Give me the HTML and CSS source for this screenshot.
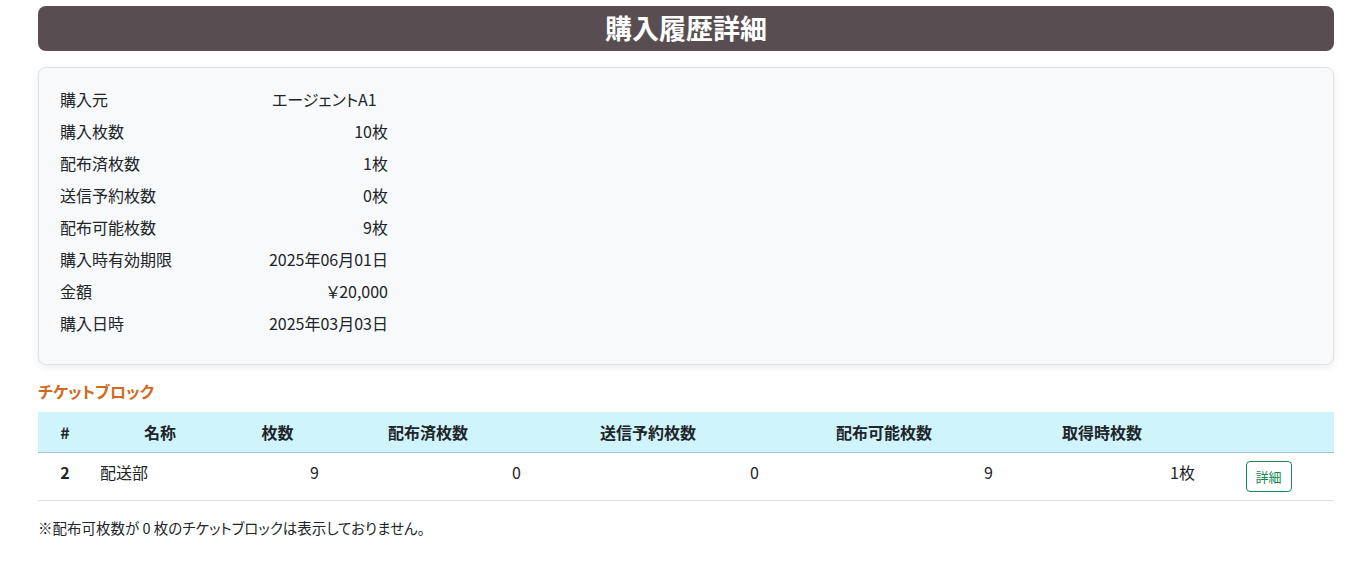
FILE: index.html
```html
<!DOCTYPE html>
<html lang="ja">
<head>
  <meta charset="UTF-8" />
  <meta name="viewport" content="width=device-width, initial-scale=1.0"/>
  <title>購入履歴詳細</title>
  <link rel="stylesheet" href="styles.css">
</head>
<body>

  <div class="page">
    <h1 class="page-title">購入履歴詳細</h1>

    <div class="detail-card">
      <div class="detail-row"><span class="label">購入元</span><span class="value">エージェントA1</span></div>
      <div class="detail-row"><span class="label">購入枚数</span><span class="value num">10枚</span></div>
      <div class="detail-row"><span class="label">配布済枚数</span><span class="value num">1枚</span></div>
      <div class="detail-row"><span class="label">送信予約枚数</span><span class="value num">0枚</span></div>
      <div class="detail-row"><span class="label">配布可能枚数</span><span class="value num">9枚</span></div>
      <div class="detail-row"><span class="label">購入時有効期限</span><span class="value num">2025年06月01日</span></div>
      <div class="detail-row"><span class="label">金額</span><span class="value num">￥20,000</span></div>
      <div class="detail-row"><span class="label">購入日時</span><span class="value num">2025年03月03日</span></div>
    </div>

    <h2 class="section-title">チケットブロック</h2>

    <table class="block-table">
      <colgroup>
        <col style="width:54px">
        <col style="width:136px">
        <col style="width:99px">
        <col style="width:202px">
        <col style="width:238px">
        <col style="width:234px">
        <col style="width:202px">
        <col style="width:131px">
      </colgroup>
      <thead>
        <tr>
          <th>#</th>
          <th>名称</th>
          <th>枚数</th>
          <th>配布済枚数</th>
          <th>送信予約枚数</th>
          <th>配布可能枚数</th>
          <th>取得時枚数</th>
          <th></th>
        </tr>
      </thead>
      <tbody>
        <tr>
          <td class="idx">2</td>
          <td>配送部</td>
          <td class="num">9</td>
          <td class="num">0</td>
          <td class="num">0</td>
          <td class="num">9</td>
          <td class="num">1枚</td>
          <td class="action"><button class="btn-detail">詳細</button></td>
        </tr>
      </tbody>
    </table>

    <p class="note">※配布可枚数が 0 枚のチケットブロックは表示しておりません。</p>
  </div>

</body>
</html>
```

FILE: styles.css
```css
* {
  box-sizing: border-box;
}

body {
  margin: 0;
  background: #fff;
  color: #212529;
  font-family: "Noto Sans CJK JP", "Noto Sans", sans-serif;
  font-size: 16px;
  font-feature-settings: "palt";
}

.page {
  padding: 6px 26px 0 38px;
}

.page-title {
  margin: 0;
  height: 45px;
  line-height: 43px;
  background: #584e51;
  color: #fff;
  border-radius: 8px;
  text-align: center;
  font-size: 27px;
  font-weight: bold;
}

.detail-card {
  margin-top: 16px;
  padding: 15px 0 25px 21px;
  background: #f8f9fa;
  border: 1px solid #dee2e6;
  border-radius: 8px;
  box-shadow: 0 2px 8px rgba(0, 0, 0, 0.08);
}

.detail-row {
  display: flex;
  height: 32px;
  align-items: center;
  white-space: nowrap;
}

.detail-row .label {
  flex: none;
  width: 212px;
}

.detail-row .value {
  flex: none;
  display: flex;
  width: 116px;
}

.detail-row .value.num {
  justify-content: flex-end;
}

.section-title {
  margin: 14px 0 0;
  height: 33px;
  line-height: 24px;
  color: #d2691e;
  font-size: 16px;
  font-weight: bold;
}

.block-table {
  width: 100%;
  border-collapse: collapse;
  table-layout: fixed;
}

.block-table th {
  height: 40px;
  background: #cff4fc;
  border-bottom: 1px solid #a3c6cd;
  font-weight: bold;
  text-align: center;
  padding: 0 8px;
}

.block-table td {
  padding: 8px;
  line-height: 22px;
  vertical-align: top;
  border-bottom: 1px solid #dee2e6;
}

.block-table td.idx {
  text-align: center;
  font-weight: bold;
}

.block-table td.num {
  text-align: right;
}

.block-table td.action {
  text-align: center;
}

.btn-detail {
  display: block;
  margin: 0 auto;
  width: 46px;
  height: 31px;
  padding: 0;
  background: #fff;
  border: 1px solid #198754;
  border-radius: 4px;
  color: #198754;
  font-family: inherit;
  font-size: 13px;
}

.note {
  margin: 16px 0 0;
  font-size: 14.5px;
}
```
